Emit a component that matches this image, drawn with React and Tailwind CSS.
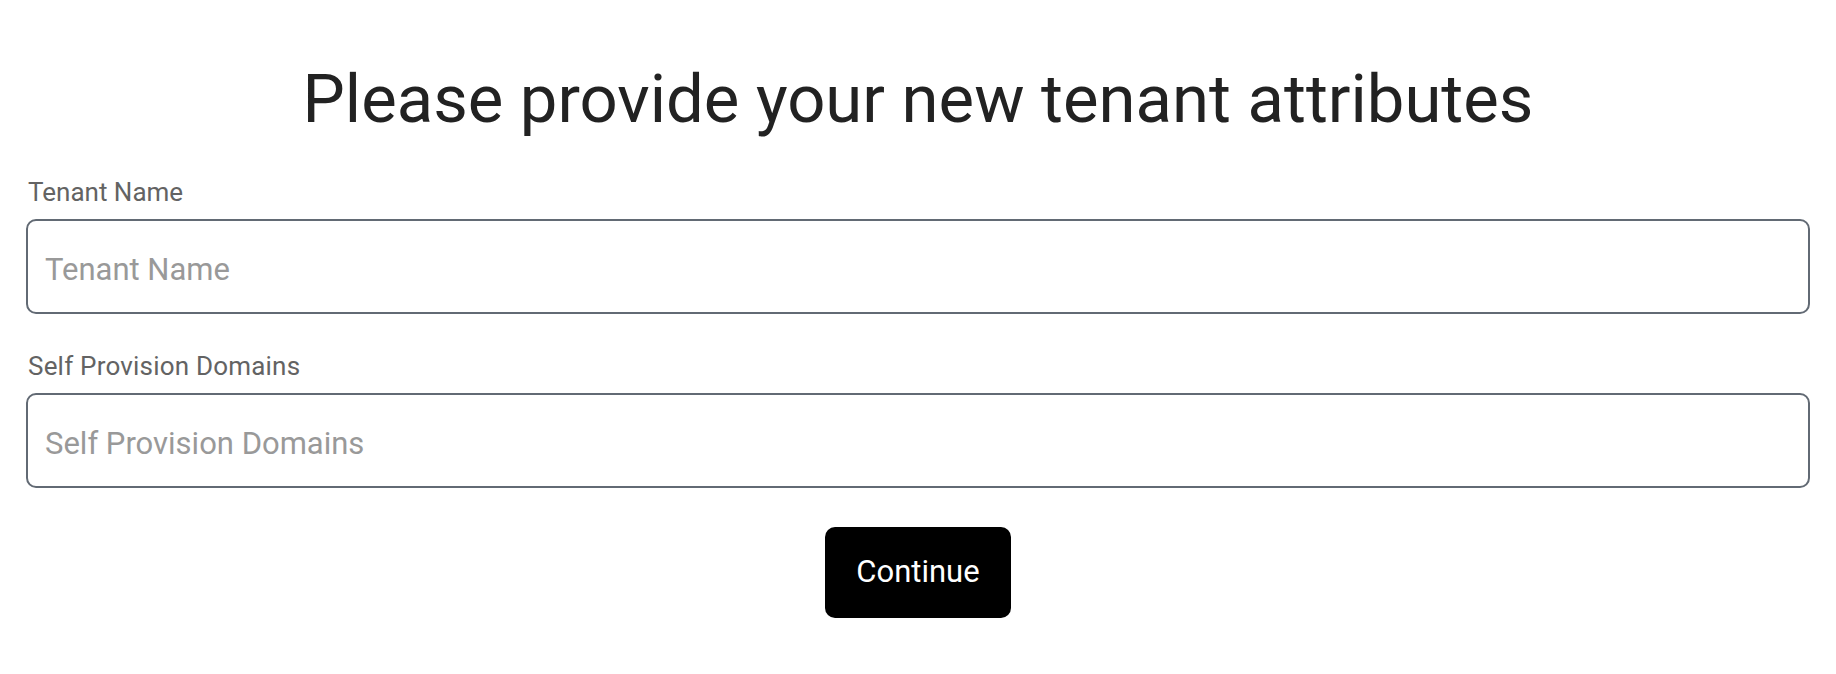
import React from "react";

export default function App() {
  return (
    <div className="min-h-screen bg-white px-[26px] font-['Roboto',sans-serif]">
      <h1 className="pt-[66px] text-center text-[67px] font-normal leading-none text-[#222222]">
        Please provide your new tenant attributes
      </h1>
      <form className="flex flex-col" onSubmit={(e) => e.preventDefault()}>
        <label className="mt-[44px] block pl-[2px] text-[26px] leading-[30px] text-[#636363]">
          Tenant Name
        </label>
        <input
          type="text"
          placeholder="Tenant Name"
          className="mt-[12px] h-[95px] w-full rounded-[10px] border-2 border-[#626a74] px-[17px] pt-[6px] text-[31px] text-[#222] outline-none placeholder:text-[#999999]"
        />
        <label className="mt-[37px] block pl-[2px] text-[26px] tracking-[0.2px] leading-[30px] text-[#636363]">
          Self Provision Domains
        </label>
        <input
          type="text"
          placeholder="Self Provision Domains"
          className="mt-[12px] h-[95px] w-full rounded-[10px] border-2 border-[#626a74] px-[17px] pt-[6px] text-[31px] text-[#222] outline-none placeholder:text-[#999999]"
        />
        <div className="mt-[39px] flex justify-center">
          <button
            type="submit"
            className="h-[91px] w-[186px] rounded-[10px] bg-black text-[31px] text-white"
          >
            Continue
          </button>
        </div>
      </form>
    </div>
  );
}
